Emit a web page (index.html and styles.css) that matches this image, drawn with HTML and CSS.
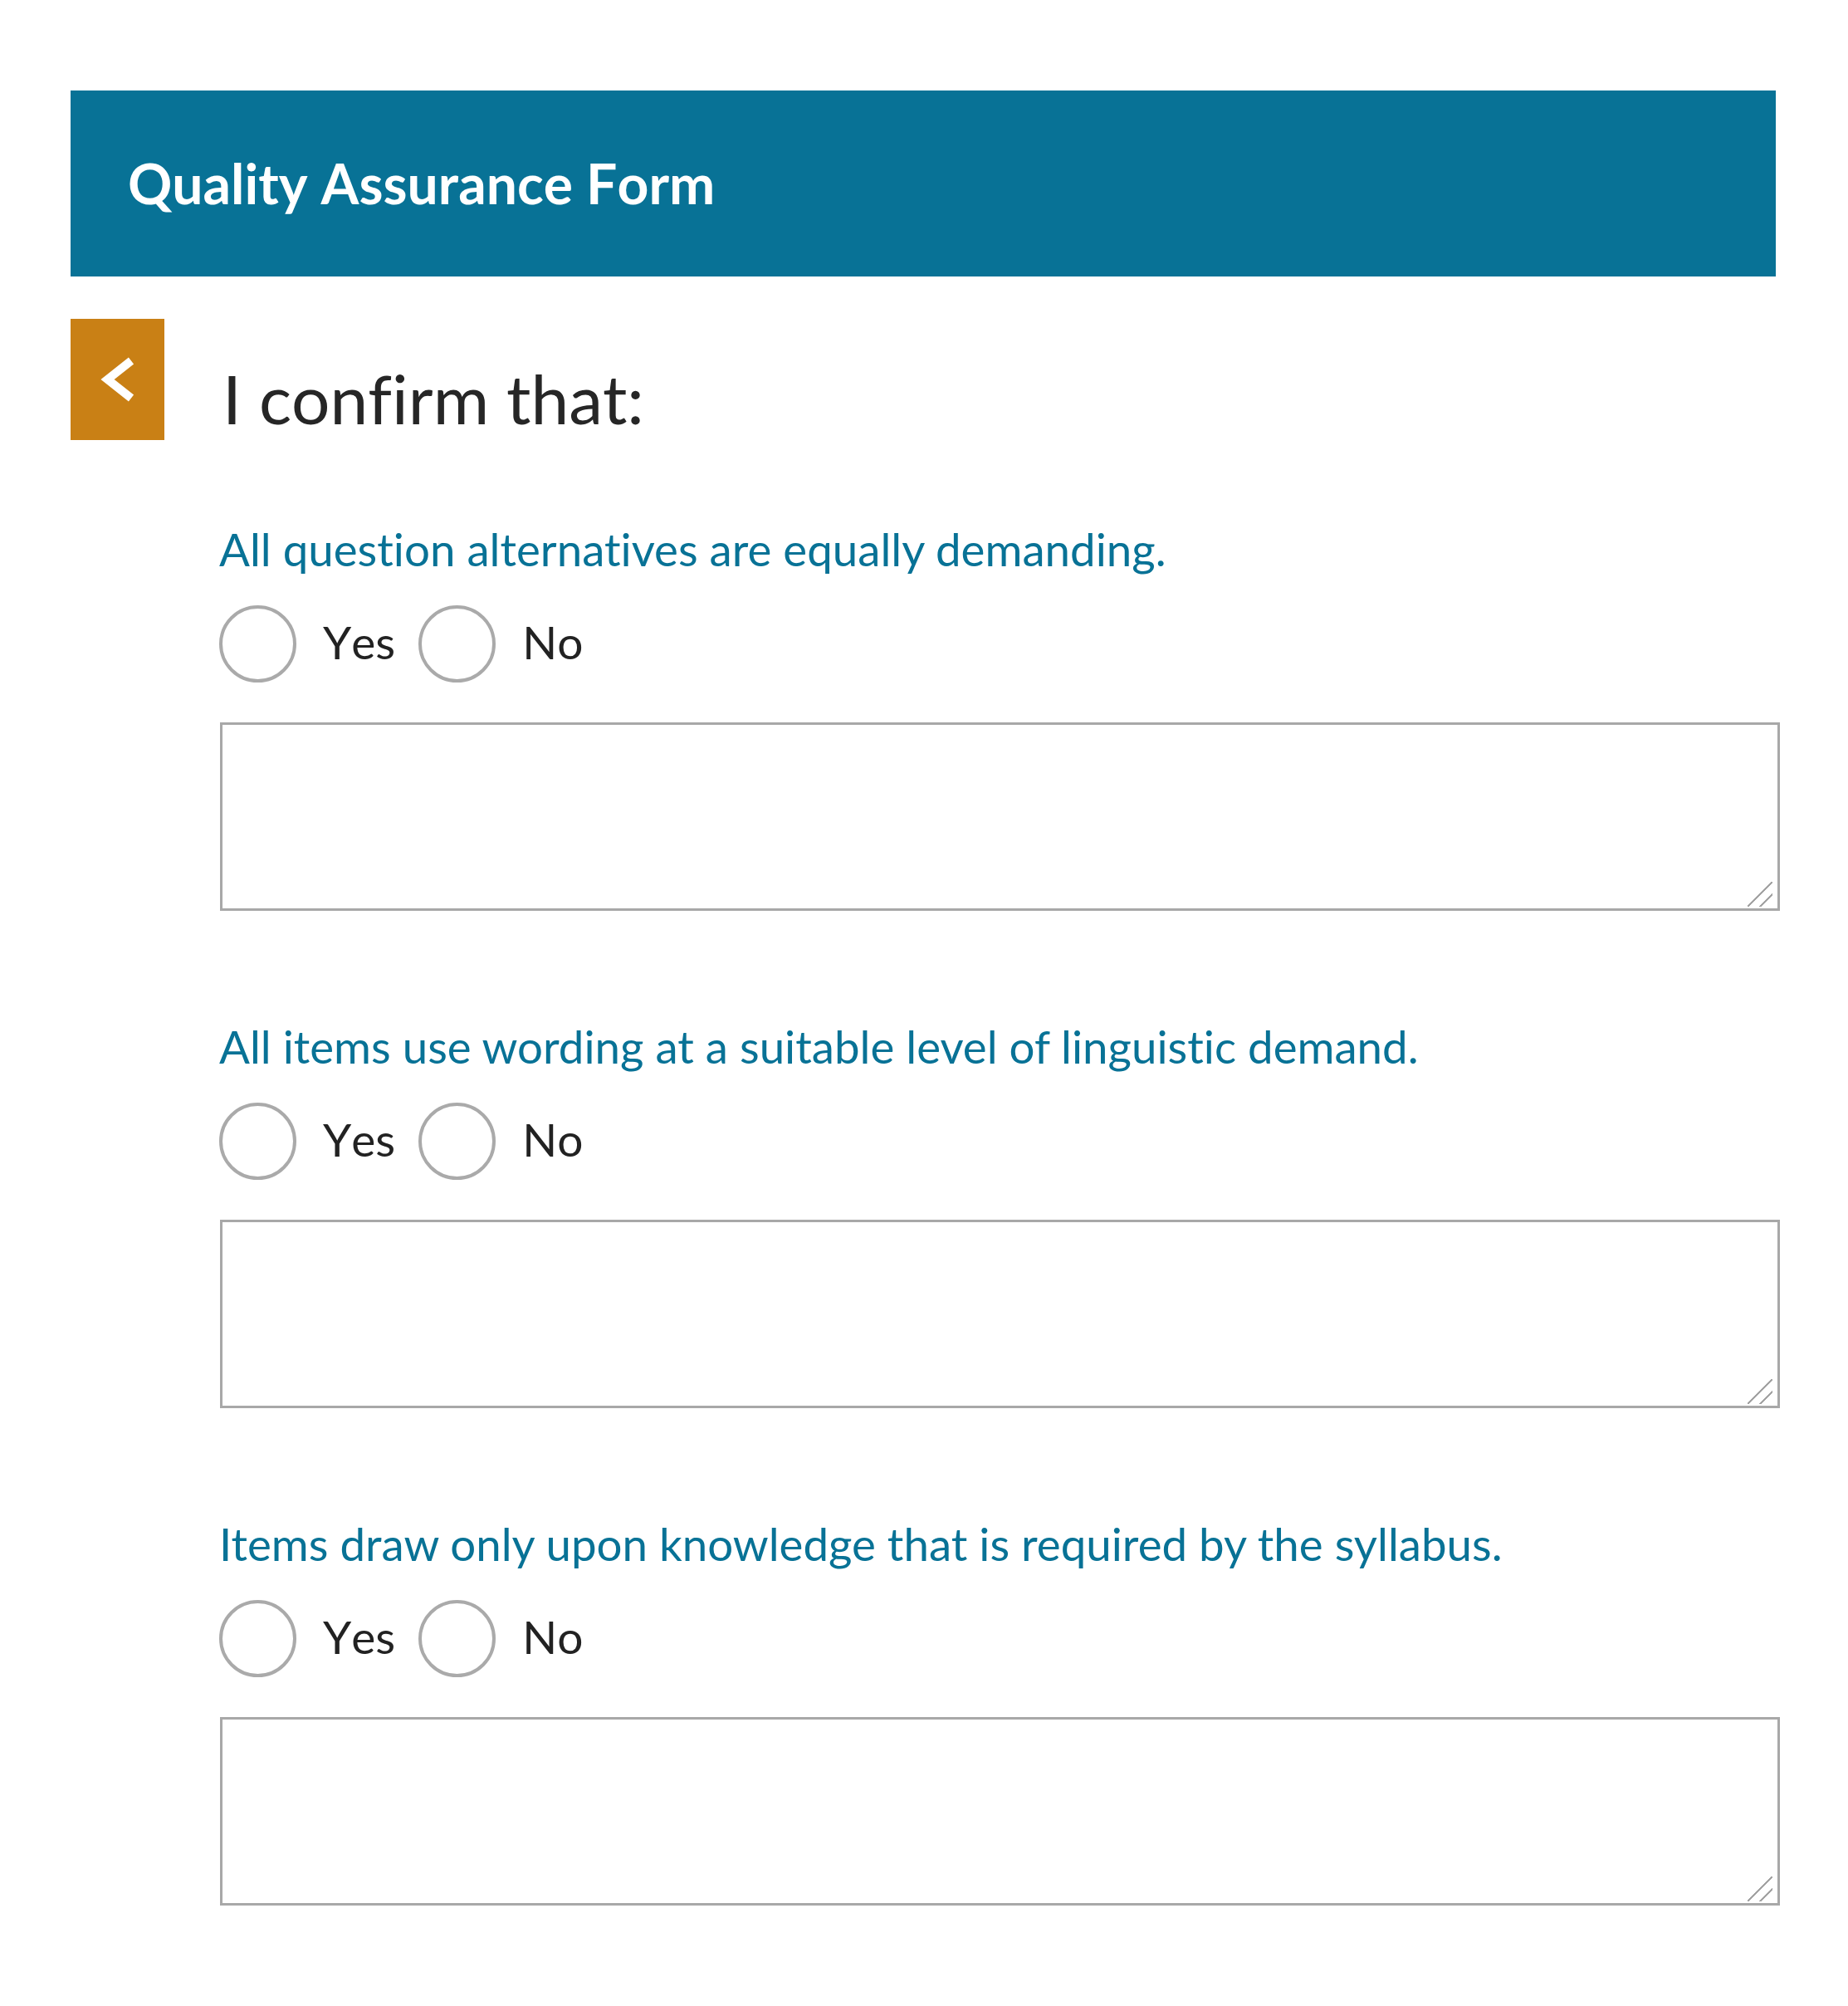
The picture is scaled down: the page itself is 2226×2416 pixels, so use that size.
FILE: index.html
```html
<!DOCTYPE html>
<html lang="en">
<head>
<meta charset="utf-8">
<title>Quality Assurance Form</title>
<link rel="stylesheet" href="styles.css">
</head>
<body>
<div class="page">
  <header class="banner">
    <h1 class="banner-title">Quality Assurance Form</h1>
  </header>

  <div class="intro">
    <button class="back" type="button" aria-label="Back">
      <svg width="113" height="146" viewBox="0 0 113 146" aria-hidden="true">
        <polyline points="73,50.5 44.5,73 73,95.5" fill="none" stroke="#ffffff" stroke-width="10" stroke-linecap="butt" stroke-linejoin="miter"/>
      </svg>
    </button>
    <h2 class="intro-title">I confirm that:</h2>
  </div>

  <form class="questions">
    <div class="question">
      <p class="question-label">All question alternatives are equally demanding.</p>
      <div class="choices">
        <label class="choice"><input type="radio" name="q1" value="yes"><span class="choice-text">Yes</span></label>
        <label class="choice"><input type="radio" name="q1" value="no"><span class="choice-text">No</span></label>
      </div>
      <textarea class="comment" name="c1"></textarea>
    </div>

    <div class="question">
      <p class="question-label">All items use wording at a suitable level of linguistic demand.</p>
      <div class="choices">
        <label class="choice"><input type="radio" name="q2" value="yes"><span class="choice-text">Yes</span></label>
        <label class="choice"><input type="radio" name="q2" value="no"><span class="choice-text">No</span></label>
      </div>
      <textarea class="comment" name="c2"></textarea>
    </div>

    <div class="question">
      <p class="question-label">Items draw only upon knowledge that is required by the syllabus.</p>
      <div class="choices">
        <label class="choice"><input type="radio" name="q3" value="yes"><span class="choice-text">Yes</span></label>
        <label class="choice"><input type="radio" name="q3" value="no"><span class="choice-text">No</span></label>
      </div>
      <textarea class="comment" name="c3"></textarea>
    </div>
  </form>
</div>
</body>
</html>
```

FILE: styles.css
```css
html, body {
  margin: 0;
  padding: 0;
  background: #ffffff;
}

body {
  font-family: Lato, "Liberation Sans", sans-serif;
  color: #222222;
  font-kerning: none;
  font-variant-ligatures: none;
}

.page {
  padding: 109px 0 0 85px;
}

.banner {
  width: 2054px;
  height: 224px;
  background: #087296;
  display: flex;
  align-items: center;
  box-sizing: border-box;
  padding-left: 69px;
}

.banner-title {
  margin: 0;
  font-size: 66px;
  font-weight: 700;
  line-height: 1.2;
  color: #ffffff;
}

.intro {
  display: flex;
  align-items: flex-start;
  margin-top: 51px;
}

.back {
  width: 113px;
  height: 146px;
  padding: 0;
  margin: 0;
  border: 0;
  background: #c98015;
  display: block;
  flex: none;
}

.back svg {
  display: block;
}

.intro-title {
  margin: 46px 0 0 70px;
  font-size: 82px;
  font-weight: 400;
  line-height: 1.2;
  color: #262626;
}

.questions {
  margin: 0;
  padding: 0 0 0 179px;
  margin-top: 99px;
}

.question {
  display: flex;
  flex-direction: column;
  align-items: flex-start;
  margin-bottom: 131px;
}

.question-label {
  margin: 0;
  font-size: 54.65px;
  line-height: 64px;
  font-kerning: normal;
  color: #087296;
}

.choices {
  display: flex;
  align-items: flex-start;
  margin-top: 36px;
}

.choice {
  display: flex;
  align-items: flex-start;
  margin-right: 28px;
}

.choice input {
  -webkit-appearance: none;
  appearance: none;
  width: 93px;
  height: 93px;
  margin: 0;
  border: 4px solid #aaaaaa;
  border-radius: 50%;
  background: #ffffff;
  box-sizing: border-box;
  flex: none;
}

.choice-text {
  margin-left: 32px;
  font-size: 55px;
  line-height: 88px;
  color: #222222;
}

.comment {
  margin-top: 48px;
  margin-left: 1px;
  width: 1879px;
  height: 227px;
  box-sizing: border-box;
  border: 3px solid #a8a8a8;
  border-radius: 0;
  padding: 8px;
  font-family: Lato, "Liberation Sans", sans-serif;
  font-size: 40px;
  resize: none;
  background-color: #ffffff;
  background-image: linear-gradient(135deg,
    transparent 20.2px, #a3a3a3 20.2px, #a3a3a3 22.4px,
    transparent 22.4px, transparent 30.8px, #a3a3a3 30.8px,
    #a3a3a3 33px, transparent 33px);
  background-size: 30px 30px;
  background-repeat: no-repeat;
  background-position: right 6px bottom 2px;
}
```
